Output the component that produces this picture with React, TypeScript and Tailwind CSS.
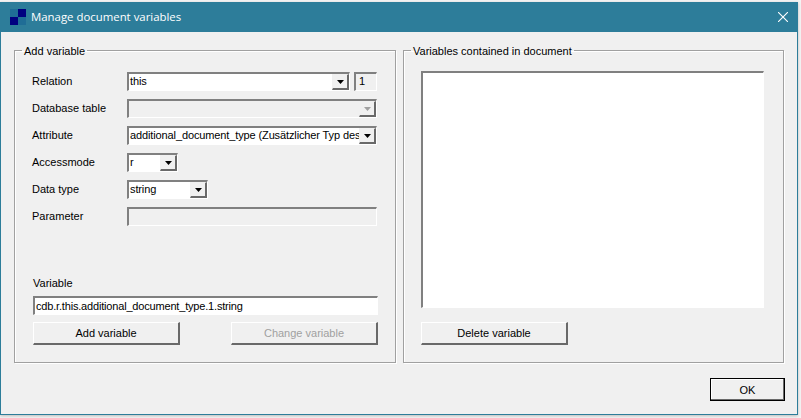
import clsx from "clsx";

const UI_FONT = "font-['Liberation_Sans',Arial,sans-serif] text-[11px] leading-[14px] text-black";

const Arrow = ({ disabled }: { disabled?: boolean }) => (
  <svg width="7" height="4" viewBox="0 0 7 4" aria-hidden="true">
    <path d="M0 0h7L3.5 4z" fill={disabled ? "#a0a0a0" : "#000"} />
  </svg>
);

// sunken win32 edge
const sunken =
  "border-t-2 border-l-2 border-b border-r border-t-[#808080] border-l-[#808080] border-b-white border-r-white";

const Combo = ({
  value,
  width,
  disabled,
}: {
  value?: string;
  width: string;
  disabled?: boolean;
}) => (
  <div
    className={clsx(
      "flex h-[19px] items-stretch overflow-hidden",
      sunken,
      width,
      disabled ? "bg-[#f0f0f0]" : "bg-white",
    )}
  >
    <span className="min-w-0 flex-1 overflow-hidden whitespace-nowrap pl-px tracking-[-0.12px]">
      {value}
    </span>
    <span className="flex w-[17px] shrink-0 items-center justify-center border-t border-l border-b-2 border-r-2 border-t-[#f0f0f0] border-l-[#f0f0f0] border-b-[#696969] border-r-[#696969] bg-[#f0f0f0]">
      <Arrow disabled={disabled} />
    </span>
  </div>
);

const Field = ({ label, children }: { label: string; children: React.ReactNode }) => (
  <div className="flex h-[19px] items-center">
    <span className="w-[95px] shrink-0 pb-[2px]">{label}</span>
    {children}
  </div>
);

const Button = ({
  label,
  disabled,
  width = "w-[147px]",
}: {
  label: string;
  disabled?: boolean;
  width?: string;
}) => (
  <button
    className={clsx(
      "h-[23px] border-t border-l border-b-2 border-r-2 border-t-white border-l-white border-b-[#696969] border-r-[#696969] bg-[#f0f0f0]",
      width,
      disabled && "text-[#a0a0a0]",
    )}
  >
    {label}
  </button>
);

const GroupBox = ({
  title,
  width,
  children,
}: {
  title: string;
  width: string;
  children: React.ReactNode;
}) => (
  <fieldset
    className={clsx(
      "h-[321px] border border-[#a0a0a0] shadow-[1px_1px_0_#fff,inset_1px_1px_0_#fff]",
      width,
    )}
  >
    <legend className="ml-[7px] px-[2px] pt-[2px] leading-[14px]">{title}</legend>
    {children}
  </fieldset>
);

export default function App() {
  return (
    <div className={clsx("h-[418px] w-[801px] overflow-hidden bg-[#f4f4f4]", UI_FONT)}>
      <div className="mt-[2px] flex h-[413px] w-[798px] flex-col border-x border-b border-[#2d7d9a] bg-[#f0f0f0] shadow-[0_1px_3px_#bbb]">
        <header className="flex h-[30px] shrink-0 items-center bg-[#2d7d9a] pl-[9px] pr-[9px] text-white">
          <svg width="16" height="16" viewBox="0 0 16 16" aria-hidden="true">
            <rect x="0" y="8" width="8" height="8" fill="#000080" />
            <rect x="8" y="0" width="8" height="8" fill="#000080" />
            <rect x="0" y="0" width="8" height="8" fill="#1f6d96" />
            <rect x="8" y="8" width="8" height="8" fill="#1f6d96" />
          </svg>
          <span className="ml-[5px] flex-1 font-['Open_Sans',sans-serif] text-[11.4px]">
            Manage document variables
          </span>
          <svg width="10" height="10" viewBox="0 0 10 10" aria-hidden="true">
            <path d="M0 0l10 10M10 0L0 10" stroke="#fff" strokeWidth="1.1" fill="none" />
          </svg>
        </header>

        <main className="flex gap-[7px] pl-[13px] pt-[10px]">
          <GroupBox title="Add variable" width="w-[382px]">
            <div className="flex flex-col gap-[8px] pl-[17px] pt-[14px]">
              <Field label="Relation">
                <Combo value="this" width="w-[223px]" />
                <span
                  className={clsx(
                    "ml-[4px] h-[19px] w-[23px] bg-[#f0f0f0] pl-[3px]",
                    sunken,
                  )}
                >
                  1
                </span>
              </Field>
              <Field label="Database table">
                <Combo width="w-[250px]" disabled />
              </Field>
              <Field label="Attribute">
                <Combo
                  value="additional_document_type (Zusätzlicher Typ des"
                  width="w-[250px]"
                />
              </Field>
              <Field label="Accessmode">
                <Combo value="r" width="w-[51px]" />
              </Field>
              <Field label="Data type">
                <Combo value="string" width="w-[81px]" />
              </Field>
              <Field label="Parameter">
                <div className={clsx("h-[19px] w-[250px] bg-[#f0f0f0]", sunken)} />
              </Field>
            </div>
            <div className="pl-[18px] pt-[50px]">
              <div className="h-[14px]">Variable</div>
              <div
                className={clsx(
                  "mt-[6px] h-[19px] w-[345px] overflow-hidden whitespace-nowrap bg-white pl-px pt-px tracking-[-0.18px]",
                  sunken,
                )}
              >
                cdb.r.this.additional_document_type.1.string
              </div>
              <div className="mt-[7px] flex w-[345px] justify-between">
                <Button label="Add variable" />
                <Button label="Change variable" disabled />
              </div>
            </div>
          </GroupBox>

          <GroupBox title="Variables contained in document" width="w-[381px]">
            <div className="pl-[17px] pt-[13px]">
              <div className={clsx("h-[237px] w-[343px] bg-white", sunken)} />
              <div className="mt-[14px]">
                <Button label="Delete variable" />
              </div>
            </div>
          </GroupBox>
        </main>

        <footer className="flex justify-end pr-[12px] pt-[15px]">
          <button className="h-[23px] w-[75px] border border-black bg-[#f0f0f0] shadow-[inset_-1px_-1px_0_#696969,inset_1px_1px_0_#fff]">
            OK
          </button>
        </footer>
      </div>
    </div>
  );
}
